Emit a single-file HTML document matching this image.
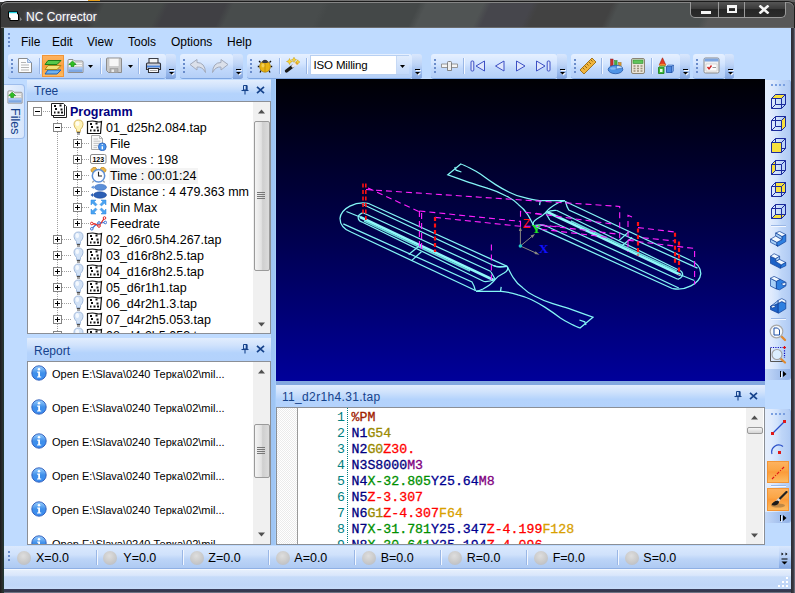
<!DOCTYPE html>
<html>
<head>
<meta charset="utf-8">
<title>NC Corrector</title>
<style>
html,body{margin:0;padding:0;}
body{width:795px;height:593px;overflow:hidden;position:relative;background:#3c3c3c;font-family:"Liberation Sans",sans-serif;font-size:12.5px;color:#000;}
.abs{position:absolute;}
#desk{left:0;top:0;width:795px;height:2px;background:linear-gradient(90deg,#f4f4f8 0,#f4f4f8 88px,#e8a020 88px,#e8a020 100px,#555 100px,#777 400px,#666 795px);}
#frame{left:0;top:1px;width:795px;height:592px;background:#1c1c1c;border-radius:7px 7px 0 0;}
#titlebar{left:1px;top:2px;width:793px;height:26px;border-radius:6px 6px 0 0;box-shadow:inset 0 1px 0 #858585, inset 0 -1px 0 #6a6a6a;
 background:linear-gradient(115deg,#3c3c3c 0%,#3c3c3c 12%,#454948 13%,#454948 20%,#404044 21%,#404044 28%,#484c4c 29%,#484c4c 40%,#444848 41%,#444848 52%,#505454 53%,#505454 60%,#46464c 61%,#46464c 66%,#424242 67%,#424242 76%,#4c5050 77%,#4c5050 88%,#585858 89%,#585858 100%);}
#title{left:26px;top:10px;color:#fff;font-size:12px;text-shadow:0 0 4px #889,0 0 2px #667;white-space:nowrap;}
#client{left:4px;top:28px;width:787px;height:561px;background:#bfdbff;}
.menu{top:35px;font-size:12px;color:#000;white-space:nowrap;}
.tb{top:54px;height:24px;border-radius:3px;background:linear-gradient(#e6f0ff 0%,#d3e5ff 40%,#c2d9fb 60%,#b4cff7 100%);border-bottom:1px solid #7ea6e2;}
.tbend{top:54px;height:24px;width:10px;border-radius:0 3px 3px 0;background:linear-gradient(#d9e7fd 0%,#bcd3f6 45%,#9bbbed 75%,#86a9e2 100%);border-bottom:1px solid #7d9fd8;}
.grip{width:3px;height:14px;top:59px;background-image:radial-gradient(circle at 1px 1px,#6a8ccb 0.9px,transparent 1.2px);background-size:3px 4px;}
.sep{width:1px;top:58px;height:16px;background:#9ab7e6;border-right:1px solid #f2f7ff;}
.ovf{width:7px;height:8px;}
.panehdr{height:21px;background:linear-gradient(#e2edfd 0%,#d1e3fc 30%,#bfd9fc 52%,#b4d3fc 65%,#b3d2fc 100%);color:#15428b;font-size:12px;}
.panehdr span{position:absolute;left:7px;top:4px;white-space:nowrap;}
.white{background:#fff;border:1px solid #8b8f96;box-sizing:border-box;overflow:hidden;}
.sb{width:17px;background:#f0f0f0;}
.thumb{left:1px;width:14px;border:1px solid #9a9a9a;border-radius:2px;background:linear-gradient(90deg,#f4f4f4 0%,#e2e2e2 45%,#cfcfcf 55%,#dcdcdc 100%);}
.trow{left:0;height:16px;white-space:nowrap;font-size:12.5px;line-height:16px;margin-top:1px;}
.rrow{left:24px;height:16px;white-space:nowrap;font-size:11px;line-height:16px;}
.code{font-family:"Liberation Mono",monospace;font-size:13.25px;font-weight:normal;-webkit-text-stroke:0.3px;white-space:pre;line-height:16px;height:16px;left:74.5px;margin-top:1px;}
.ln{font-family:"Liberation Mono",monospace;font-size:13.25px;white-space:pre;line-height:16px;height:16px;color:#008080;left:30px;width:38px;text-align:right;margin-top:1px;}
.cN{color:#000080}.cG{color:#9a8a00}.cZ{color:#ff0000}.cX{color:#009000}.cY{color:#000090}.cM{color:#800080}.cF{color:#d8a000}.cP{color:#a02000}.cS{color:#000080}
.coord{top:551px;font-size:12.5px;white-space:nowrap;}
.led{width:14px;height:14px;top:550.5px;border-radius:50%;background:radial-gradient(circle at 45% 35%,#dedede 0%,#cbcbcb 50%,#b8bcc4 90%,#c0c8d8 100%);}
.csep{width:1px;top:550px;height:15px;background:#9ab7e6;border-right:1px solid #f2f7ff;}
</style>
</head>
<body>
<div id="desk" class="abs"></div>
<div id="frame" class="abs"></div>
<div id="titlebar" class="abs"></div>
<div id="title" class="abs">NC Corrector</div>
<div id="client" class="abs"></div>

<div class="abs" style="left:8px;top:33px;width:3px;height:14px;background-image:radial-gradient(circle at 1px 1px,#6a8ccb 0.9px,transparent 1.2px);background-size:3px 4px;"></div>
<div class="abs menu" style="left:21px;">File</div>
<div class="abs menu" style="left:52px;">Edit</div>
<div class="abs menu" style="left:87px;">View</div>
<div class="abs menu" style="left:128px;">Tools</div>
<div class="abs menu" style="left:171px;">Options</div>
<div class="abs menu" style="left:227px;">Help</div>
<!-- caption buttons -->
<div class="abs" style="left:690px;top:2px;width:96px;height:16px;border:1px solid #9a9a9a;border-top:none;border-radius:0 0 5px 5px;box-sizing:border-box;background:linear-gradient(#555 0%,#3a3a3a 45%,#262626 50%,#2c2c2c 100%);"></div>
<div class="abs" style="left:718px;top:2px;width:1px;height:15px;background:#9a9a9a;"></div>
<div class="abs" style="left:744px;top:2px;width:1px;height:15px;background:#9a9a9a;"></div>
<div class="abs" style="left:701px;top:11px;width:10px;height:3px;background:#f4f4f4;"></div>
<div class="abs" style="left:727px;top:5px;width:10px;height:8px;border:2px solid #f4f4f4;border-top-width:3px;box-sizing:border-box;"></div>
<svg class="abs" style="left:758px;top:5px;" width="12" height="9" viewBox="0 0 12 9"><path d="M1.500 0.500L10.500 8.500M10.500 0.500L1.500 8.500" stroke="#f4f4f4" stroke-width="2.500" fill="none"/></svg>
<!-- app icon -->
<svg class="abs" style="left:7px;top:10px;" width="16" height="13" viewBox="0 0 16 13"><path d="M1.5 1.5 L10.5 1.5 L10.5 4 L11.5 4 L11.5 10.5 L3 10.5 L3 8 L1.5 8 Z" fill="#fff" stroke="#000" stroke-width="1"/><path d="M2 2.5 L10 2.5" stroke="#20d0e0" stroke-width="1.4"/><path d="M13 7 L13 11 L15 9.5 Z" fill="#888"/></svg>

<div class="abs tb" style="left:8px;width:158px;"></div><div class="abs tbend" style="left:166px;width:10px;"></div><div class="abs grip" style="left:11px;"></div><svg class="abs" style="left:169px;top:69px;" width="7" height="8" viewBox="0 0 7 8"><path d="M1 1.500H6" stroke="#fff" stroke-width="1" opacity=".9"/><path d="M1 4H6L3.500 6.500Z" fill="#fff" opacity=".9"/><path d="M0 0.500H5" stroke="#000" stroke-width="1"/><path d="M0 3H5L2.500 5.500Z" fill="#000"/></svg><div class="abs tb" style="left:180px;width:53px;"></div><div class="abs tbend" style="left:233px;width:10px;"></div><div class="abs grip" style="left:183px;"></div><svg class="abs" style="left:236px;top:69px;" width="7" height="8" viewBox="0 0 7 8"><path d="M1 1.500H6" stroke="#fff" stroke-width="1" opacity=".9"/><path d="M1 4H6L3.500 6.500Z" fill="#fff" opacity=".9"/><path d="M0 0.500H5" stroke="#000" stroke-width="1"/><path d="M0 3H5L2.500 5.500Z" fill="#000"/></svg><div class="abs tb" style="left:247px;width:165px;"></div><div class="abs tbend" style="left:412px;width:10px;"></div><div class="abs grip" style="left:250px;"></div><svg class="abs" style="left:415px;top:69px;" width="7" height="8" viewBox="0 0 7 8"><path d="M1 1.500H6" stroke="#fff" stroke-width="1" opacity=".9"/><path d="M1 4H6L3.500 6.500Z" fill="#fff" opacity=".9"/><path d="M0 0.500H5" stroke="#000" stroke-width="1"/><path d="M0 3H5L2.500 5.500Z" fill="#000"/></svg><div class="abs tb" style="left:431px;width:126px;"></div><div class="abs tbend" style="left:557px;width:10px;"></div><div class="abs grip" style="left:434px;"></div><svg class="abs" style="left:560px;top:69px;" width="7" height="8" viewBox="0 0 7 8"><path d="M1 1.500H6" stroke="#fff" stroke-width="1" opacity=".9"/><path d="M1 4H6L3.500 6.500Z" fill="#fff" opacity=".9"/><path d="M0 0.500H5" stroke="#000" stroke-width="1"/><path d="M0 3H5L2.500 5.500Z" fill="#000"/></svg><div class="abs tb" style="left:571px;width:109px;"></div><div class="abs tbend" style="left:680px;width:10px;"></div><div class="abs grip" style="left:574px;"></div><svg class="abs" style="left:683px;top:69px;" width="7" height="8" viewBox="0 0 7 8"><path d="M1 1.500H6" stroke="#fff" stroke-width="1" opacity=".9"/><path d="M1 4H6L3.500 6.500Z" fill="#fff" opacity=".9"/><path d="M0 0.500H5" stroke="#000" stroke-width="1"/><path d="M0 3H5L2.500 5.500Z" fill="#000"/></svg><div class="abs tb" style="left:693px;width:32px;"></div><div class="abs tbend" style="left:725px;width:9px;"></div><div class="abs grip" style="left:696px;"></div><svg class="abs" style="left:728px;top:69px;" width="7" height="8" viewBox="0 0 7 8"><path d="M1 1.500H6" stroke="#fff" stroke-width="1" opacity=".9"/><path d="M1 4H6L3.500 6.500Z" fill="#fff" opacity=".9"/><path d="M0 0.500H5" stroke="#000" stroke-width="1"/><path d="M0 3H5L2.500 5.500Z" fill="#000"/></svg><div class="abs" style="left:42px;top:55px;width:22px;height:22px;box-sizing:border-box;border:1px solid #f29536;background:linear-gradient(#fdb25f 0%,#fba647 40%,#fb9b3a 50%,#fdbb60 100%);"></div><svg class="abs" style="left:17px;top:57px;" width="16" height="17" viewBox="0 0 16 17"><path d="M1.5 1.5H10.5L14.5 5.5V15.5H1.5Z" fill="#fdfdfd" stroke="#8a8a8a"/><path d="M10.5 1.5V5.5H14.5Z" fill="#cfe0f5" stroke="#7f9fd0" stroke-width=".8"/><path d="M4 5.5H9M4 8H12M4 10.5H12M4 13H12" stroke="#b5b5b5" stroke-width="1.2"/></svg><div class="abs sep" style="left:39px;"></div><svg class="abs" style="left:44px;top:57px;" width="18" height="18" viewBox="0 0 18 18"><path d="M4 13L1 17H13L17 13Z" fill="#6fb1ee" stroke="#1e62b8" stroke-width="1"/><path d="M4 8.5L1 12.5H13L17 8.5Z" fill="#f2e27a" stroke="#a58a1a" stroke-width="1"/><path d="M4 3.5L1 7.5H13L17 3.5Z" fill="#57c84a" stroke="#1f7d1c" stroke-width="1"/></svg><svg class="abs" style="left:67px;top:58px;" width="17" height="16" viewBox="0 0 17 16"><path d="M1 2.5Q1 1.5 2 1.5H6L7.5 3H15Q16 3 16 4V14.5H1Z" fill="#f4f4f4" stroke="#8f8f8f"/><path d="M8 4.5H15.5M8 6.5H15.5M8 8.5H15.5" stroke="#c8c8c8" stroke-width=".8"/><path d="M1.5 9.5H15.5V14H1.5Z" fill="#7da7e3"/><path d="M1.5 9.5H15.5V11.5H1.5Z" fill="#a9c7f1"/><path d="M5.5 3L1.8 6.5H4V8.5H7V6.5H9.2Z" fill="#2fc024" stroke="#128a0e" stroke-width=".7"/></svg><svg class="abs" style="left:88px;top:65px;" width="5" height="3" viewBox="0 0 5 3"><path d="M0 0H5L2.500 3Z" fill="#000"/></svg><div class="abs sep" style="left:100px;"></div><svg class="abs" style="left:105px;top:57px;" width="18" height="17" viewBox="0 0 18 17"><path d="M1.5 2Q1.5 1 2.5 1H15.5Q16.5 1 16.5 2V15.5H3.5L1.5 13.5Z" fill="#c9c9c9" stroke="#8c8c8c"/><path d="M4 1.5H14V9.5H4Z" fill="#f6f6f6" stroke="#bdbdbd" stroke-width=".6"/><path d="M5 11.5H13V15.5H5Z" fill="#b0b0b0" stroke="#999" stroke-width=".6"/><path d="M6.5 12.5H9V15H6.5Z" fill="#ebebeb"/></svg><svg class="abs" style="left:128px;top:65px;" width="5" height="3" viewBox="0 0 5 3"><path d="M0 0H5L2.500 3Z" fill="#000"/></svg><div class="abs sep" style="left:138px;"></div><svg class="abs" style="left:145px;top:57px;" width="17" height="17" viewBox="0 0 17 17"><path d="M4 1.500H13V7H4Z" fill="#f4f4f4" stroke="#3c3e46" stroke-width="1.100"/><path d="M1.500 7Q1.500 6 2.500 6H14.500Q15.500 6 15.500 7V12.500H1.500Z" fill="#c8ccd6" stroke="#2e3038" stroke-width="1.100"/><path d="M2 9.500H15" stroke="#4a86e0" stroke-width="1.800"/><path d="M3.500 11.500H13.500V15.500H3.500Z" fill="#fdfdfd" stroke="#2e3038" stroke-width="1.100"/><path d="M5 13.5H12" stroke="#999" stroke-width=".8"/></svg><svg class="abs" style="left:189px;top:58px;" width="18" height="16" viewBox="0 0 18 16"><path d="M1 6.5L8 1.5V4.5Q16 4.5 16.5 14.5Q13.5 8.5 8 9V12Z" fill="#dbe0ea" stroke="#a2aabb" stroke-width="1" stroke-linejoin="round"/></svg><svg class="abs" style="left:211px;top:58px;" width="18" height="16" viewBox="0 0 18 16"><path d="M17 6.5L10 1.5V4.5Q2 4.5 1.5 14.5Q4.5 8.5 10 9V12Z" fill="#dbe0ea" stroke="#a2aabb" stroke-width="1" stroke-linejoin="round"/></svg><svg class="abs" style="left:257px;top:57px;" width="16" height="17" viewBox="0 0 16 17"><path d="M3.500 5.500L2 4M12.500 5.500L14 4M2.500 9.500H0.800M13.500 9.500H15.200M4 13.500L3 15.500M12 13.500L13 15.500" stroke="#111" stroke-width="1.300"/><ellipse cx="8" cy="9.500" rx="5.400" ry="5.700" fill="#e9b314" stroke="#a87a00" stroke-width=".7"/><path d="M8 5V15" stroke="#b88a08" stroke-width=".8"/><path d="M4.500 5.200Q8 0.500 11.500 5.200Q8 7 4.500 5.200Z" fill="#3a3a40"/><ellipse cx="6" cy="8.500" rx="1.500" ry="2" fill="#f8dc70" opacity=".7"/></svg><div class="abs sep" style="left:279px;"></div><svg class="abs" style="left:284px;top:57px;" width="17" height="17" viewBox="0 0 17 17"><path d="M2.500 14L9 9" stroke="#1a1a1a" stroke-width="3.400" stroke-linecap="round"/><path d="M9 9L13 6" stroke="#e8e8ee" stroke-width="3.400" stroke-linecap="round"/><path d="M12 6.800L13.500 5.600" stroke="#e8a030" stroke-width="3"/><path d="M5.5 1.5L6.40 3.60L8.5 4.5L6.40 5.40L5.5 7.5L4.60 5.40L2.5 4.5L4.60 3.60Z" fill="#f8d838" stroke="#c89a10" stroke-width=".5"/><path d="M10 0.19999999999999973L10.78 2.02L12.6 2.8L10.78 3.58L10 5.4L9.22 3.58L7.4 2.8L9.22 2.02Z" fill="#f8d838" stroke="#c89a10" stroke-width=".5"/><path d="M13.8 2.8L14.46 4.34L16.0 5L14.46 5.66L13.8 7.2L13.14 5.66L11.600000000000001 5L13.14 4.34Z" fill="#f8d838" stroke="#c89a10" stroke-width=".5"/></svg><div class="abs sep" style="left:306px;"></div><div class="abs" style="left:310px;top:55px;width:99px;height:20px;box-sizing:border-box;border:1px solid #b8d0f2;background:#fff;"></div><div class="abs" style="left:313.5px;top:59px;font-size:11.5px;letter-spacing:-0.15px;white-space:nowrap;">ISO Milling</div><div class="abs" style="left:396px;top:56px;width:12px;height:18px;background:linear-gradient(#e2edfd,#c3d9fa);border-left:1px solid #c6d9f5;"></div><svg class="abs" style="left:400px;top:65px;" width="5" height="3" viewBox="0 0 5 3"><path d="M0 0H5L2.500 3Z" fill="#000"/></svg><svg class="abs" style="left:441px;top:61px;" width="17" height="11" viewBox="0 0 17 11"><path d="M0.500 3H16.500V6.500H0.500Z" fill="#f4f4f4" stroke="#8d8d8d" stroke-width=".9"/><path d="M6.500 1.500Q6.500 0.500 7.500 0.500H9.500Q10.500 0.500 10.500 1.500V9.500H6.500Z" fill="#efefef" stroke="#777" stroke-width=".9"/></svg><div class="abs sep" style="left:463px;"></div><svg class="abs" style="left:469.5px;top:60px;" width="16" height="12" viewBox="0 0 16 12"><rect x="1" y="1" width="2.800" height="10" rx="1" fill="#dfe6fb" stroke="#3c4fc4"/><path d="M14.500 1V11L6 6Z" fill="#dfe6fb" stroke="#3c4fc4" stroke-linejoin="round"/></svg><svg class="abs" style="left:493.5px;top:60px;" width="12" height="12" viewBox="0 0 12 12"><path d="M10 1V11L1.500 6Z" fill="#dfe6fb" stroke="#3c4fc4" stroke-linejoin="round"/></svg><svg class="abs" style="left:514.5px;top:60px;" width="12" height="12" viewBox="0 0 12 12"><path d="M1.500 1V11L10 6Z" fill="#dfe6fb" stroke="#3c4fc4" stroke-linejoin="round"/></svg><svg class="abs" style="left:535px;top:60px;" width="16" height="12" viewBox="0 0 16 12"><rect x="12.200" y="1" width="2.800" height="10" rx="1" fill="#dfe6fb" stroke="#3c4fc4"/><path d="M1.500 1V11L10 6Z" fill="#dfe6fb" stroke="#3c4fc4" stroke-linejoin="round"/></svg><svg class="abs" style="left:579px;top:57px;" width="18" height="18" viewBox="0 0 18 18"><path d="M1 13L13 1L17 5L5 17Z" fill="#f0b43c" stroke="#9a6a10" stroke-width=".9"/><path d="M4 11L5.5 12.5M6 9L8 11M8 7L9.5 8.5M10 5L12 7M12 3L13.5 4.5" stroke="#7a5208" stroke-width=".8"/></svg><div class="abs sep" style="left:601px;"></div><svg class="abs" style="left:607px;top:57px;" width="17" height="18" viewBox="0 0 17 18"><rect x="3.500" y="2" width="2.600" height="7" fill="#c8302c" stroke="#7a1010" stroke-width=".4"/><rect x="7.500" y="3.500" width="2.600" height="6" fill="#48b040" stroke="#1a6a18" stroke-width=".4"/><rect x="11.500" y="5.500" width="2.600" height="5" fill="#e0982a" stroke="#8a5a08" stroke-width=".4"/><ellipse cx="8.500" cy="12.500" rx="7.300" ry="4.200" fill="#4f94e6" stroke="#2458a8" stroke-width=".8"/><path d="M9 12L16 11A7.300 4.200 0 0 0 10 8.400Z" fill="#c4defc" stroke="#2458a8" stroke-width=".5"/><ellipse cx="6" cy="11.500" rx="3" ry="1.200" fill="#9cc8f8" opacity=".7"/></svg><svg class="abs" style="left:630px;top:57px;" width="16" height="18" viewBox="0 0 16 18"><rect x="1.5" y="1.5" width="13" height="15" rx="1.5" fill="#e9e4d8" stroke="#8a8476"/><rect x="3" y="3" width="10" height="3.5" fill="#5ec45a" stroke="#2f8a2d" stroke-width=".6"/><path d="M3.5 9H5.5M7 9H9M10.5 9H12.5M3.5 11.5H5.5M7 11.5H9M10.5 11.5H12.5M3.5 14H5.5M7 14H9M10.5 14H12.5" stroke="#9a8f78" stroke-width="1.5"/></svg><div class="abs sep" style="left:651px;"></div><svg class="abs" style="left:657px;top:57px;" width="17" height="18" viewBox="0 0 17 18"><path d="M5.500 0.800L8.800 8H2.200Z" fill="#e43a22" stroke="#a01c0c" stroke-width=".6"/><ellipse cx="5.500" cy="8" rx="3.300" ry="1.300" fill="#f08a30"/><path d="M1.500 10.500H7V16.500H1.500Z" fill="#3cba38" stroke="#1b7a18" stroke-width=".8"/><path d="M1.500 10.500L3 9H8.500L7 10.500Z" fill="#8fe08a" stroke="#1b7a18" stroke-width=".5"/><path d="M3 12H5.500V15H3Z" fill="#e8f8e6"/><path d="M9.500 9.500H15V15.500H9.500Z" fill="#4a86e0" stroke="#1d4fa5" stroke-width=".8"/><path d="M9.500 9.500L11 8H16.500L15 9.500ZM15 9.500L16.500 8V14L15 15.500Z" fill="#8cb6f2" stroke="#1d4fa5" stroke-width=".5"/></svg><svg class="abs" style="left:703px;top:57px;" width="17" height="17" viewBox="0 0 17 17"><rect x="1" y="1" width="15" height="15" rx="1.5" fill="#f0f0f0" stroke="#8a8a8a"/><path d="M1.5 1.5H15.5V4.5H1.5Z" fill="#7fa6e0"/><path d="M3 7H14V14H3Z" fill="#fcfcfc" stroke="#c4c4c4" stroke-width=".6"/><path d="M4.5 10L6 11.8L8.5 8.5" stroke="#d02020" stroke-width="1.4" fill="none"/><path d="M9.5 10.5H13" stroke="#999" stroke-width="1"/></svg>
<div class="abs" style="left:4px;top:84px;width:21px;height:55px;box-sizing:border-box;border:1px solid #9ebdec;border-left:none;border-radius:0 4px 4px 0;background:linear-gradient(90deg,#e9f1fd,#d6e5fb);"></div><svg class="abs" style="left:7px;top:89px;" width="16" height="16" viewBox="0 0 17 16"><path d="M1 2.5Q1 1.5 2 1.5H6L7.5 3H15Q16 3 16 4V14.5H1Z" fill="#f4f4f4" stroke="#8f8f8f"/><path d="M8 4.5H15.5M8 6.5H15.5M8 8.5H15.5" stroke="#c8c8c8" stroke-width=".8"/><path d="M1.5 9.5H15.5V14H1.5Z" fill="#7da7e3"/><path d="M1.5 9.5H15.5V11.5H1.5Z" fill="#a9c7f1"/><path d="M5.5 3L1.8 6.5H4V8.5H7V6.5H9.2Z" fill="#2fc024" stroke="#128a0e" stroke-width=".7"/></svg><div class="abs" style="left:8px;top:108px;width:14px;height:30px;color:#15428b;font-size:12.5px;writing-mode:vertical-rl;line-height:14px;white-space:nowrap;">Files</div><div class="abs panehdr" style="left:27px;top:80px;width:244px;"><span>Tree</span></div><svg class="abs" style="left:240.5px;top:85px;" width="8" height="10" viewBox="0 0 8 10"><path d="M2.500 0.500H6V5H2.500Z" fill="none" stroke="#15428b" stroke-width="1"/><path d="M5.500 0.500V5" stroke="#15428b" stroke-width="1.600"/><path d="M0.500 5.500H7.500" stroke="#15428b" stroke-width="1.100"/><path d="M4 5.500V9.500" stroke="#15428b" stroke-width="1.100"/></svg><svg class="abs" style="left:255.5px;top:86px;" width="9" height="8" viewBox="0 0 9 8"><path d="M1 0.8L8 7.2M8 0.8L1 7.2" stroke="#15428b" stroke-width="1.7" fill="none"/></svg><div class="abs white" id="tree" style="left:27px;top:101px;width:244px;height:233px;"><div class="abs sb" style="left:225px;top:0;height:231px;"><svg class="abs" style="left:4px;top:7px;" width="9" height="5" viewBox="0 0 9 5"><path d="M1 4.500L4.500 0.500L8 4.500Z" fill="#505050"/></svg><div class="abs thumb" style="top:19px;height:148px;"></div><svg class="abs" style="left:4px;top:90px;" width="8" height="7"><path d="M0 .5H8M0 2.5H8M0 4.5H8M0 6.5H8" stroke="#777" stroke-width="1"/></svg><svg class="abs" style="left:4px;top:220px;" width="9" height="5" viewBox="0 0 9 5"><path d="M1 0.500L4.500 4.500L8 0.500Z" fill="#505050"/></svg></div><svg class="abs" style="left:0;top:0;" width="226" height="232"><path d="M29.500 18V232M49.500 34V122" stroke="#a0a0a0" stroke-width="1" stroke-dasharray="1 1" fill="none"/><path d="M30 25.5H44" stroke="#a0a0a0" stroke-width="1" stroke-dasharray="1 1"/><path d="M30 137.5H44" stroke="#a0a0a0" stroke-width="1" stroke-dasharray="1 1"/><path d="M30 153.5H44" stroke="#a0a0a0" stroke-width="1" stroke-dasharray="1 1"/><path d="M30 169.5H44" stroke="#a0a0a0" stroke-width="1" stroke-dasharray="1 1"/><path d="M30 185.5H44" stroke="#a0a0a0" stroke-width="1" stroke-dasharray="1 1"/><path d="M30 201.5H44" stroke="#a0a0a0" stroke-width="1" stroke-dasharray="1 1"/><path d="M30 217.5H44" stroke="#a0a0a0" stroke-width="1" stroke-dasharray="1 1"/><path d="M30 233.5H44" stroke="#a0a0a0" stroke-width="1" stroke-dasharray="1 1"/><path d="M50 41.5H62" stroke="#a0a0a0" stroke-width="1" stroke-dasharray="1 1"/><path d="M50 57.5H62" stroke="#a0a0a0" stroke-width="1" stroke-dasharray="1 1"/><path d="M50 73.5H62" stroke="#a0a0a0" stroke-width="1" stroke-dasharray="1 1"/><path d="M50 89.5H62" stroke="#a0a0a0" stroke-width="1" stroke-dasharray="1 1"/><path d="M50 105.5H62" stroke="#a0a0a0" stroke-width="1" stroke-dasharray="1 1"/><path d="M50 121.5H62" stroke="#a0a0a0" stroke-width="1" stroke-dasharray="1 1"/><path d="M11 9.5H22" stroke="#a0a0a0" stroke-width="1" stroke-dasharray="1 1"/></svg><div class="abs" style="left:5px;top:5px;width:9px;height:9px;box-sizing:border-box;border:1px solid #848484;background:#fff;"></div><div class="abs" style="left:7px;top:9px;width:5px;height:1px;background:#000;"></div><svg class="abs" style="left:22px;top:0px;" width="18" height="17" viewBox="0 0 18 17"><path d="M3.5 3.5H15.5L16.5 4.5V15.5H3.5Z" fill="#fff" stroke="#222"/><path d="M1.5 1.5H13.5L14.5 2.5V13.5H1.5Z" fill="#fff" stroke="#222"/><path d="M4 4H6M9.500 3.500H11.500M5 7H7M10.500 7.500H12.500M7.500 10.500H9.500M11 10.500H13M4 10.500H5.500" stroke="#111" stroke-width="2"/></svg><div class="abs trow" style="left:42px;top:1px;font-weight:bold;color:#000080;">Programm</div><div class="abs" style="left:25px;top:21px;width:9px;height:9px;box-sizing:border-box;border:1px solid #848484;background:#fff;"></div><div class="abs" style="left:27px;top:25px;width:5px;height:1px;background:#000;"></div><svg class="abs" style="left:45px;top:17px;" width="11" height="16" viewBox="0 0 11 16"><path d="M5.5 1Q10 1 10 5.5Q10 8 7.5 10.5V12.5H3.5V10.5Q1 8 1 5.5Q1 1 5.5 1Z" fill="#fdf3b8" stroke="#d4b050" stroke-width=".9"/><ellipse cx="4.500" cy="4.500" rx="2" ry="2.500" fill="#fff" opacity=".8"/><path d="M3.8 13.500H7.200M4 15H7" stroke="#555" stroke-width="1.200"/></svg><svg class="abs" style="left:58px;top:18px;" width="17" height="15" viewBox="0 0 17 15"><path d="M1.500 1.500Q7 0.500 10 1.500T15.500 1.500L14.500 13.500H1.500Z" fill="#fff" stroke="#111" stroke-width="1.200"/><path d="M4 4H6M9.500 3.500H11.500M5 7H7M10.500 7.500H12.500M7.500 10.500H9.500M11 10.500H13M4 10.500H5.500" stroke="#111" stroke-width="2"/></svg><div class="abs trow" style="left:78px;top:17px;">01_d25h2.084.tap</div><div class="abs" style="left:45px;top:37px;width:9px;height:9px;box-sizing:border-box;border:1px solid #848484;background:#fff;"></div><div class="abs" style="left:47px;top:41px;width:5px;height:1px;background:#000;"></div><div class="abs" style="left:49px;top:39px;width:1px;height:5px;background:#000;"></div><svg class="abs" style="left:62px;top:33px;" width="17" height="16" viewBox="0 0 17 16"><path d="M1.500 .500H9.500L12.500 3.500V14.500H1.500Z" fill="#f8f8f8" stroke="#a8a8a8"/><path d="M9.500 .500V3.500H12.500" fill="none" stroke="#a8a8a8" stroke-width=".8"/><path d="M3.500 4H8M3.500 6.200H10.500M3.500 8.400H10.500M3.500 10.600H8M3.500 12.600H7" stroke="#bdbdbd" stroke-width=".9"/><circle cx="12.300" cy="11.800" r="3.900" fill="#4a94ea" stroke="#2a60b8" stroke-width=".8"/><path d="M12.300 9.200V10M12.300 11.200V14.200" stroke="#fff" stroke-width="1.400"/></svg><div class="abs trow" style="left:81px;top:33px;padding:0 2px 0 1px;">File</div><div class="abs" style="left:45px;top:53px;width:9px;height:9px;box-sizing:border-box;border:1px solid #848484;background:#fff;"></div><div class="abs" style="left:47px;top:57px;width:5px;height:1px;background:#000;"></div><div class="abs" style="left:49px;top:55px;width:1px;height:5px;background:#000;"></div><svg class="abs" style="left:62px;top:49px;" width="17" height="16" viewBox="0 0 17 16"><rect x=".5" y="3.500" width="15.500" height="9" rx="1.500" fill="#fff" stroke="#8c8c8c"/><text x="8.300" y="10.600" font-family="Liberation Sans, sans-serif" font-size="7" font-weight="bold" text-anchor="middle" fill="#000">123</text></svg><div class="abs trow" style="left:81px;top:49px;padding:0 2px 0 1px;">Moves : 198</div><div class="abs" style="left:45px;top:69px;width:9px;height:9px;box-sizing:border-box;border:1px solid #848484;background:#fff;"></div><div class="abs" style="left:47px;top:73px;width:5px;height:1px;background:#000;"></div><div class="abs" style="left:49px;top:71px;width:1px;height:5px;background:#000;"></div><svg class="abs" style="left:62px;top:65px;" width="17" height="16" viewBox="0 0 17 16"><ellipse cx="3.8" cy="2.8" rx="3" ry="2.300" transform="rotate(-35 3.8 2.8)" fill="#ecb548" stroke="#b88420" stroke-width=".6"/><ellipse cx="13.200" cy="2.8" rx="3" ry="2.300" transform="rotate(35 13.2 2.8)" fill="#ecb548" stroke="#b88420" stroke-width=".6"/><path d="M3.500 14L2.500 15.500M13.500 14L14.500 15.500" stroke="#888" stroke-width="1.200"/><circle cx="8.500" cy="8.800" r="6.200" fill="#fcfcff" stroke="#5c8fd6" stroke-width="1.500"/><path d="M8.500 4.800V9H12" stroke="#222" stroke-width="1.100" fill="none"/></svg><div class="abs trow" style="left:81px;top:65px;padding:0 2px 0 1px;background:#f4f4f4;">Time : 00:01:24</div><div class="abs" style="left:45px;top:85px;width:9px;height:9px;box-sizing:border-box;border:1px solid #848484;background:#fff;"></div><div class="abs" style="left:47px;top:89px;width:5px;height:1px;background:#000;"></div><div class="abs" style="left:49px;top:87px;width:1px;height:5px;background:#000;"></div><svg class="abs" style="left:62px;top:81px;" width="17" height="16" viewBox="0 0 17 16"><ellipse cx="10.500" cy="4.300" rx="6" ry="3" fill="#5b8fd8" stroke="#3a6cc0" stroke-width=".6"/><path d="M1 4.300L3.800 2.500V6.100Z" fill="#5b8fd8"/><ellipse cx="10" cy="12" rx="6.500" ry="3.200" fill="#2c5fb4" stroke="#204a98" stroke-width=".6"/><path d="M0.500 12L3 10V14Z" fill="#2c5fb4"/></svg><div class="abs trow" style="left:81px;top:81px;padding:0 2px 0 1px;">Distance : 4 479.363 mm</div><div class="abs" style="left:45px;top:101px;width:9px;height:9px;box-sizing:border-box;border:1px solid #848484;background:#fff;"></div><div class="abs" style="left:47px;top:105px;width:5px;height:1px;background:#000;"></div><div class="abs" style="left:49px;top:103px;width:1px;height:5px;background:#000;"></div><svg class="abs" style="left:62px;top:97px;" width="17" height="16" viewBox="0 0 17 16"><path d="M1 1H6L4.3 2.7L7 5.5L5.5 7L2.7 4.3L1 6ZM16 1V6L14.3 4.3L11.5 7L10 5.5L12.7 2.7L11 1ZM1 15V10L2.7 11.7L5.5 9L7 10.5L4.3 13.3L6 15ZM16 15H11L12.7 13.3L10 10.5L11.5 9L14.3 11.7L16 10Z" fill="#4aa4f2" stroke="#2f86dc" stroke-width=".5"/></svg><div class="abs trow" style="left:81px;top:97px;padding:0 2px 0 1px;">Min Max</div><div class="abs" style="left:45px;top:117px;width:9px;height:9px;box-sizing:border-box;border:1px solid #848484;background:#fff;"></div><div class="abs" style="left:47px;top:121px;width:5px;height:1px;background:#000;"></div><div class="abs" style="left:49px;top:119px;width:1px;height:5px;background:#000;"></div><svg class="abs" style="left:62px;top:113px;" width="17" height="16" viewBox="0 0 17 16"><path d="M1.500 14L5 10.500L9 8L15.500 7.500" stroke="#3a6fd0" stroke-width="1.100" fill="none"/><path d="M1.500 8.500L5 9L9 11L14.500 3" stroke="#e02828" stroke-width="1.300" fill="none"/><g fill="#fff" stroke-width="1"><circle cx="1.800" cy="13.800" r="1.300" stroke="#3a6fd0"/><circle cx="9" cy="8" r="1.300" stroke="#3a6fd0"/><circle cx="15.300" cy="7.500" r="1.300" stroke="#3a6fd0"/><circle cx="1.800" cy="8.500" r="1.300" stroke="#e02828"/><circle cx="9" cy="11" r="1.300" stroke="#e02828"/><circle cx="14.500" cy="3" r="1.300" stroke="#e02828"/></g></svg><div class="abs trow" style="left:81px;top:113px;padding:0 2px 0 1px;">Feedrate</div><div class="abs" style="left:25px;top:133px;width:9px;height:9px;box-sizing:border-box;border:1px solid #848484;background:#fff;"></div><div class="abs" style="left:27px;top:137px;width:5px;height:1px;background:#000;"></div><div class="abs" style="left:29px;top:135px;width:1px;height:5px;background:#000;"></div><svg class="abs" style="left:45px;top:129px;" width="11" height="16" viewBox="0 0 11 16"><path d="M5.5 1Q10 1 10 5.5Q10 8 7.5 10.5V12.5H3.5V10.5Q1 8 1 5.5Q1 1 5.5 1Z" fill="#d2e2f6" stroke="#9cb4d8" stroke-width=".9"/><ellipse cx="4.300" cy="4.500" rx="1.800" ry="2.600" fill="#fff" opacity=".75"/><path d="M3.800 13.500H7.200M4 15H7" stroke="#4a4a4a" stroke-width="1.200"/></svg><svg class="abs" style="left:58px;top:130px;" width="17" height="15" viewBox="0 0 17 15"><path d="M1.500 1.500Q7 0.500 10 1.500T15.500 1.500L14.500 13.500H1.500Z" fill="#fff" stroke="#111" stroke-width="1.200"/><path d="M4 4H6M9.500 3.500H11.500M5 7H7M10.500 7.500H12.500M7.500 10.500H9.500M11 10.500H13M4 10.500H5.500" stroke="#111" stroke-width="2"/></svg><div class="abs trow" style="left:78px;top:129px;">02_d6r0.5h4.267.tap</div><div class="abs" style="left:25px;top:149px;width:9px;height:9px;box-sizing:border-box;border:1px solid #848484;background:#fff;"></div><div class="abs" style="left:27px;top:153px;width:5px;height:1px;background:#000;"></div><div class="abs" style="left:29px;top:151px;width:1px;height:5px;background:#000;"></div><svg class="abs" style="left:45px;top:145px;" width="11" height="16" viewBox="0 0 11 16"><path d="M5.5 1Q10 1 10 5.5Q10 8 7.5 10.5V12.5H3.5V10.5Q1 8 1 5.5Q1 1 5.5 1Z" fill="#d2e2f6" stroke="#9cb4d8" stroke-width=".9"/><ellipse cx="4.300" cy="4.500" rx="1.800" ry="2.600" fill="#fff" opacity=".75"/><path d="M3.800 13.500H7.200M4 15H7" stroke="#4a4a4a" stroke-width="1.200"/></svg><svg class="abs" style="left:58px;top:146px;" width="17" height="15" viewBox="0 0 17 15"><path d="M1.500 1.500Q7 0.500 10 1.500T15.500 1.500L14.500 13.500H1.500Z" fill="#fff" stroke="#111" stroke-width="1.200"/><path d="M4 4H6M9.500 3.500H11.500M5 7H7M10.500 7.500H12.500M7.500 10.500H9.500M11 10.500H13M4 10.500H5.500" stroke="#111" stroke-width="2"/></svg><div class="abs trow" style="left:78px;top:145px;">03_d16r8h2.5.tap</div><div class="abs" style="left:25px;top:165px;width:9px;height:9px;box-sizing:border-box;border:1px solid #848484;background:#fff;"></div><div class="abs" style="left:27px;top:169px;width:5px;height:1px;background:#000;"></div><div class="abs" style="left:29px;top:167px;width:1px;height:5px;background:#000;"></div><svg class="abs" style="left:45px;top:161px;" width="11" height="16" viewBox="0 0 11 16"><path d="M5.5 1Q10 1 10 5.5Q10 8 7.5 10.5V12.5H3.5V10.5Q1 8 1 5.5Q1 1 5.5 1Z" fill="#d2e2f6" stroke="#9cb4d8" stroke-width=".9"/><ellipse cx="4.300" cy="4.500" rx="1.800" ry="2.600" fill="#fff" opacity=".75"/><path d="M3.800 13.500H7.200M4 15H7" stroke="#4a4a4a" stroke-width="1.200"/></svg><svg class="abs" style="left:58px;top:162px;" width="17" height="15" viewBox="0 0 17 15"><path d="M1.500 1.500Q7 0.500 10 1.500T15.500 1.500L14.500 13.500H1.500Z" fill="#fff" stroke="#111" stroke-width="1.200"/><path d="M4 4H6M9.500 3.500H11.500M5 7H7M10.500 7.500H12.500M7.500 10.500H9.500M11 10.500H13M4 10.500H5.500" stroke="#111" stroke-width="2"/></svg><div class="abs trow" style="left:78px;top:161px;">04_d16r8h2.5.tap</div><div class="abs" style="left:25px;top:181px;width:9px;height:9px;box-sizing:border-box;border:1px solid #848484;background:#fff;"></div><div class="abs" style="left:27px;top:185px;width:5px;height:1px;background:#000;"></div><div class="abs" style="left:29px;top:183px;width:1px;height:5px;background:#000;"></div><svg class="abs" style="left:45px;top:177px;" width="11" height="16" viewBox="0 0 11 16"><path d="M5.5 1Q10 1 10 5.5Q10 8 7.5 10.5V12.5H3.5V10.5Q1 8 1 5.5Q1 1 5.5 1Z" fill="#d2e2f6" stroke="#9cb4d8" stroke-width=".9"/><ellipse cx="4.300" cy="4.500" rx="1.800" ry="2.600" fill="#fff" opacity=".75"/><path d="M3.800 13.500H7.200M4 15H7" stroke="#4a4a4a" stroke-width="1.200"/></svg><svg class="abs" style="left:58px;top:178px;" width="17" height="15" viewBox="0 0 17 15"><path d="M1.500 1.500Q7 0.500 10 1.500T15.500 1.500L14.500 13.500H1.500Z" fill="#fff" stroke="#111" stroke-width="1.200"/><path d="M4 4H6M9.500 3.500H11.500M5 7H7M10.500 7.500H12.500M7.500 10.500H9.500M11 10.500H13M4 10.500H5.500" stroke="#111" stroke-width="2"/></svg><div class="abs trow" style="left:78px;top:177px;">05_d6r1h1.tap</div><div class="abs" style="left:25px;top:197px;width:9px;height:9px;box-sizing:border-box;border:1px solid #848484;background:#fff;"></div><div class="abs" style="left:27px;top:201px;width:5px;height:1px;background:#000;"></div><div class="abs" style="left:29px;top:199px;width:1px;height:5px;background:#000;"></div><svg class="abs" style="left:45px;top:193px;" width="11" height="16" viewBox="0 0 11 16"><path d="M5.5 1Q10 1 10 5.5Q10 8 7.5 10.5V12.5H3.5V10.5Q1 8 1 5.5Q1 1 5.5 1Z" fill="#d2e2f6" stroke="#9cb4d8" stroke-width=".9"/><ellipse cx="4.300" cy="4.500" rx="1.800" ry="2.600" fill="#fff" opacity=".75"/><path d="M3.800 13.500H7.200M4 15H7" stroke="#4a4a4a" stroke-width="1.200"/></svg><svg class="abs" style="left:58px;top:194px;" width="17" height="15" viewBox="0 0 17 15"><path d="M1.500 1.500Q7 0.500 10 1.500T15.500 1.500L14.500 13.500H1.500Z" fill="#fff" stroke="#111" stroke-width="1.200"/><path d="M4 4H6M9.500 3.500H11.500M5 7H7M10.500 7.500H12.500M7.500 10.500H9.500M11 10.500H13M4 10.500H5.500" stroke="#111" stroke-width="2"/></svg><div class="abs trow" style="left:78px;top:193px;">06_d4r2h1.3.tap</div><div class="abs" style="left:25px;top:213px;width:9px;height:9px;box-sizing:border-box;border:1px solid #848484;background:#fff;"></div><div class="abs" style="left:27px;top:217px;width:5px;height:1px;background:#000;"></div><div class="abs" style="left:29px;top:215px;width:1px;height:5px;background:#000;"></div><svg class="abs" style="left:45px;top:209px;" width="11" height="16" viewBox="0 0 11 16"><path d="M5.5 1Q10 1 10 5.5Q10 8 7.5 10.5V12.5H3.5V10.5Q1 8 1 5.5Q1 1 5.5 1Z" fill="#d2e2f6" stroke="#9cb4d8" stroke-width=".9"/><ellipse cx="4.300" cy="4.500" rx="1.800" ry="2.600" fill="#fff" opacity=".75"/><path d="M3.800 13.500H7.200M4 15H7" stroke="#4a4a4a" stroke-width="1.200"/></svg><svg class="abs" style="left:58px;top:210px;" width="17" height="15" viewBox="0 0 17 15"><path d="M1.500 1.500Q7 0.500 10 1.500T15.500 1.500L14.500 13.500H1.500Z" fill="#fff" stroke="#111" stroke-width="1.200"/><path d="M4 4H6M9.500 3.500H11.500M5 7H7M10.500 7.500H12.500M7.500 10.500H9.500M11 10.500H13M4 10.500H5.500" stroke="#111" stroke-width="2"/></svg><div class="abs trow" style="left:78px;top:209px;">07_d4r2h5.053.tap</div><div class="abs" style="left:25px;top:229px;width:9px;height:9px;box-sizing:border-box;border:1px solid #848484;background:#fff;"></div><div class="abs" style="left:27px;top:233px;width:5px;height:1px;background:#000;"></div><div class="abs" style="left:29px;top:231px;width:1px;height:5px;background:#000;"></div><svg class="abs" style="left:45px;top:225px;" width="11" height="16" viewBox="0 0 11 16"><path d="M5.5 1Q10 1 10 5.5Q10 8 7.5 10.5V12.5H3.5V10.5Q1 8 1 5.5Q1 1 5.5 1Z" fill="#d2e2f6" stroke="#9cb4d8" stroke-width=".9"/><ellipse cx="4.300" cy="4.500" rx="1.800" ry="2.600" fill="#fff" opacity=".75"/><path d="M3.800 13.500H7.200M4 15H7" stroke="#4a4a4a" stroke-width="1.200"/></svg><svg class="abs" style="left:58px;top:226px;" width="17" height="15" viewBox="0 0 17 15"><path d="M1.500 1.500Q7 0.500 10 1.500T15.500 1.500L14.500 13.500H1.500Z" fill="#fff" stroke="#111" stroke-width="1.200"/><path d="M4 4H6M9.500 3.500H11.500M5 7H7M10.500 7.500H12.500M7.500 10.500H9.500M11 10.500H13M4 10.500H5.500" stroke="#111" stroke-width="2"/></svg><div class="abs trow" style="left:78px;top:225px;">08_d4r2h5.053.tap</div></div><div class="abs panehdr" style="left:27px;top:338px;width:244px;height:23px;"><span style="top:6px;">Report</span></div><svg class="abs" style="left:240.5px;top:344px;" width="8" height="10" viewBox="0 0 8 10"><path d="M2.500 0.500H6V5H2.500Z" fill="none" stroke="#15428b" stroke-width="1"/><path d="M5.500 0.500V5" stroke="#15428b" stroke-width="1.600"/><path d="M0.500 5.500H7.500" stroke="#15428b" stroke-width="1.100"/><path d="M4 5.500V9.500" stroke="#15428b" stroke-width="1.100"/></svg><svg class="abs" style="left:255.5px;top:345px;" width="9" height="8" viewBox="0 0 9 8"><path d="M1 0.8L8 7.2M8 0.8L1 7.2" stroke="#15428b" stroke-width="1.7" fill="none"/></svg><div class="abs white" id="report" style="left:27px;top:361px;width:244px;height:184px;"><div class="abs sb" style="left:225px;top:0;height:182px;"><svg class="abs" style="left:4px;top:7px;" width="9" height="5" viewBox="0 0 9 5"><path d="M1 4.500L4.500 0.500L8 4.500Z" fill="#505050"/></svg><div class="abs thumb" style="top:62px;height:52px;"></div><svg class="abs" style="left:4px;top:85px;" width="8" height="7"><path d="M0 .5H8M0 2.5H8M0 4.5H8M0 6.5H8" stroke="#777" stroke-width="1"/></svg><svg class="abs" style="left:4px;top:170px;" width="9" height="5" viewBox="0 0 9 5"><path d="M1 0.500L4.500 4.500L8 0.500Z" fill="#505050"/></svg></div><svg class="abs" style="left:3px;top:3px;" width="16" height="16" viewBox="0 0 16 16"><defs><linearGradient id="ig0" x1="0" y1="0" x2="0" y2="1"><stop offset="0" stop-color="#9ad0ff"/><stop offset=".5" stop-color="#3f8fea"/><stop offset="1" stop-color="#3a8cf0"/></linearGradient></defs><circle cx="8" cy="8" r="7.200" fill="url(#ig0)" stroke="#2a58b8" stroke-width=".9"/><circle cx="8" cy="4.200" r="1.300" fill="#fff"/><path d="M6.200 6.600H9V11.400H10.200V12.600H6V11.400H7.200V7.800H6.200Z" fill="#fff"/></svg><div class="abs rrow" style="top:4px;">Open E:\Slava\0240 Терка\02\mil...</div><svg class="abs" style="left:3px;top:37px;" width="16" height="16" viewBox="0 0 16 16"><defs><linearGradient id="ig1" x1="0" y1="0" x2="0" y2="1"><stop offset="0" stop-color="#9ad0ff"/><stop offset=".5" stop-color="#3f8fea"/><stop offset="1" stop-color="#3a8cf0"/></linearGradient></defs><circle cx="8" cy="8" r="7.200" fill="url(#ig1)" stroke="#2a58b8" stroke-width=".9"/><circle cx="8" cy="4.200" r="1.300" fill="#fff"/><path d="M6.200 6.600H9V11.400H10.200V12.600H6V11.400H7.200V7.800H6.200Z" fill="#fff"/></svg><div class="abs rrow" style="top:38px;">Open E:\Slava\0240 Терка\02\mil...</div><svg class="abs" style="left:3px;top:71px;" width="16" height="16" viewBox="0 0 16 16"><defs><linearGradient id="ig2" x1="0" y1="0" x2="0" y2="1"><stop offset="0" stop-color="#9ad0ff"/><stop offset=".5" stop-color="#3f8fea"/><stop offset="1" stop-color="#3a8cf0"/></linearGradient></defs><circle cx="8" cy="8" r="7.200" fill="url(#ig2)" stroke="#2a58b8" stroke-width=".9"/><circle cx="8" cy="4.200" r="1.300" fill="#fff"/><path d="M6.200 6.600H9V11.400H10.200V12.600H6V11.400H7.200V7.800H6.200Z" fill="#fff"/></svg><div class="abs rrow" style="top:72px;">Open E:\Slava\0240 Терка\02\mil...</div><svg class="abs" style="left:3px;top:105px;" width="16" height="16" viewBox="0 0 16 16"><defs><linearGradient id="ig3" x1="0" y1="0" x2="0" y2="1"><stop offset="0" stop-color="#9ad0ff"/><stop offset=".5" stop-color="#3f8fea"/><stop offset="1" stop-color="#3a8cf0"/></linearGradient></defs><circle cx="8" cy="8" r="7.200" fill="url(#ig3)" stroke="#2a58b8" stroke-width=".9"/><circle cx="8" cy="4.200" r="1.300" fill="#fff"/><path d="M6.200 6.600H9V11.400H10.200V12.600H6V11.400H7.200V7.800H6.200Z" fill="#fff"/></svg><div class="abs rrow" style="top:106px;">Open E:\Slava\0240 Терка\02\mil...</div><svg class="abs" style="left:3px;top:139px;" width="16" height="16" viewBox="0 0 16 16"><defs><linearGradient id="ig4" x1="0" y1="0" x2="0" y2="1"><stop offset="0" stop-color="#9ad0ff"/><stop offset=".5" stop-color="#3f8fea"/><stop offset="1" stop-color="#3a8cf0"/></linearGradient></defs><circle cx="8" cy="8" r="7.200" fill="url(#ig4)" stroke="#2a58b8" stroke-width=".9"/><circle cx="8" cy="4.200" r="1.300" fill="#fff"/><path d="M6.200 6.600H9V11.400H10.200V12.600H6V11.400H7.200V7.800H6.200Z" fill="#fff"/></svg><div class="abs rrow" style="top:140px;">Open E:\Slava\0240 Терка\02\mil...</div><svg class="abs" style="left:3px;top:173px;" width="16" height="16" viewBox="0 0 16 16"><defs><linearGradient id="ig5" x1="0" y1="0" x2="0" y2="1"><stop offset="0" stop-color="#9ad0ff"/><stop offset=".5" stop-color="#3f8fea"/><stop offset="1" stop-color="#3a8cf0"/></linearGradient></defs><circle cx="8" cy="8" r="7.200" fill="url(#ig5)" stroke="#2a58b8" stroke-width=".9"/><circle cx="8" cy="4.200" r="1.300" fill="#fff"/><path d="M6.200 6.600H9V11.400H10.200V12.600H6V11.400H7.200V7.800H6.200Z" fill="#fff"/></svg><div class="abs rrow" style="top:174px;">Open E:\Slava\0240 Терка\02\mil...</div></div>
<div class="abs" style="left:276px;top:381px;width:489px;height:4px;background:#84a8df;"></div><div class="abs" style="left:271px;top:79px;width:5px;height:466px;background:linear-gradient(90deg,#9ec4f3 0%,#a0c6f4 70%,#aad2fd 100%);"></div><svg class="abs" style="left:276px;top:79px;" width="489" height="302" viewBox="276 79 489 302"><defs><linearGradient id="vg" x1="0" y1="0" x2="0" y2="1"><stop offset="0" stop-color="#000004"/><stop offset="0.5" stop-color="#00004a"/><stop offset="1" stop-color="#00009a"/></linearGradient><g id="half" fill="none" stroke="#84f6f6" stroke-width="1.25">
<path d="M368 203.3C356 201 341 208 340 218.4C340 226 346 230 351 232"/>
<path d="M368 203.3L507.3 266.4"/>
<path d="M351 232L475.5 290.5"/>
<path d="M362 204L493 265.3Q497 267 500 266.5L507 266.4"/>
<path d="M343.3 223.9L472 282Q474 285 475.5 291"/>
<path d="M363 212.7Q357 215 358.4 219Q359 221 363 222.5"/>
<path d="M363 212.7L491 271.5"/>
<path d="M363 222.5L450 265L484 281.5"/>
<path d="M346.4 211.5L360 217"/>
<path d="M360 217L493.6 280" stroke-width="2.6" stroke="#8ff8f8"/>
<path d="M364 221L470 271" stroke-width="1.6" stroke="#6adada"/>
<path d="M408.7 254.4L418.8 246.3M411.8 260.4L421.4 251.8"/>
<path d="M507.3 266.4Q509 270 504 273Q498 276 495.2 279.3Q492 284 483 289Q479 291 476 291.3"/>
<path d="M493.7 265.6Q497 268 507 266.4M491 272L495.2 279.3M484 281.5Q489 282 495.2 279.5M476 291.3H483"/>
<path d="M507.3 266.4C510 272 512 276 513.4 277.8C516 282 519 285 522.5 287.6C526 291 530 294 534.6 296C540 299 546 301.5 552.8 303.6C560 306 567 308 574 310.4C580 312.500 587 315 593 317.2L580 328C577 327 574 325.500 571 324C567 322 564 320.500 560.4 318C555 314 550 310.500 545.2 307.4C540 304 536 302 531.6 299.8C527 297.500 523 296 518 294.8C512 293 507 291.800 501.2 291.4L476 291.3"/>
<path d="M501.2 286.9L500.5 291.4M579.4 320L584.7 321.8L586 325"/>
</g></defs><rect x="276" y="79" width="489" height="302" fill="url(#vg)"/><use href="#half"/><use href="#half" transform="rotate(180 520.4 246)"/><g fill="none" stroke="#ff20ff" stroke-width="1.1" stroke-dasharray="6 4">
<path d="M366 189.500L480 197.2L560 202.5L619.7 206.4V240.6"/>
<path d="M368 188L418.7 211.5"/>
<path d="M419.4 211V246.3M421.6 213V251.8"/>
<path d="M419.4 211L520.5 221.4M435 217.400L520.5 226.3H560"/>
<path d="M520.5 226.8V211.5L544 215"/>
<path d="M536 213.4L612 224M540 224.8L618.4 234.2M541.3 229.2L613.4 238"/>
<path d="M632 217L628 215.3V252M628 240H635"/>
<path d="M638 227.6L675 232M642.8 237.8L675 241M627.6 240.3L694.6 248.5V284.5"/>
<path d="M491.4 244.4V279.8"/>
</g><g fill="none" stroke="#ff1010" stroke-width="2.2" stroke-dasharray="4 2.5">
<path d="M363 183.600V216M365.8 183.6V222.6" stroke-width="1.6"/>
<path d="M435 217V252M638 222V255.500M675 232.700V264.3M679 241.500V274.4"/>
</g><g stroke="#8a8a80" stroke-width="1" fill="#8a8a80">
<path d="M520.4 246V229M520.4 246L533 235.500M520.4 246L537 253.500" fill="none"/>
<path d="M520.4 226.500L518.900 231H521.900ZM535 234L530.500 235.500L532.500 238ZM539.500 254.800L535.500 251.200L534.500 254Z" stroke="none"/>
<circle cx="520.4" cy="246" r="1.8" fill="#20c8c8" stroke="none"/>
</g>
<text x="522.8" y="227.800" font-family="Liberation Sans, sans-serif" font-size="12.500" fill="#ff1010" stroke="none">Z</text>
<text x="531.500" y="232.800" font-family="Liberation Serif, serif" font-weight="bold" font-size="13.500" fill="#20e820">Y</text>
<text x="538.800" y="252.800" font-family="Liberation Serif, serif" font-weight="bold" font-size="13.500" fill="#1010ff">X</text>
</svg>
<div class="abs panehdr" style="left:276px;top:385px;width:489px;height:22px;"><span style="top:5px;left:6px;letter-spacing:0.33px;">11_d2r1h4.31.tap</span></div><svg class="abs" style="left:734px;top:391px;" width="8" height="10" viewBox="0 0 8 10"><path d="M2.500 0.500H6V5H2.500Z" fill="none" stroke="#15428b" stroke-width="1"/><path d="M5.500 0.500V5" stroke="#15428b" stroke-width="1.600"/><path d="M0.500 5.500H7.500" stroke="#15428b" stroke-width="1.100"/><path d="M4 5.500V9.500" stroke="#15428b" stroke-width="1.100"/></svg><svg class="abs" style="left:749px;top:392px;" width="9" height="8" viewBox="0 0 9 8"><path d="M1 0.8L8 7.2M8 0.8L1 7.2" stroke="#15428b" stroke-width="1.7" fill="none"/></svg><div class="abs white" id="code" style="left:276px;top:407px;width:489px;height:138px;"><div class="abs" style="left:0;top:0;width:20px;height:138px;background-color:#fff;background-image:linear-gradient(45deg,#ebebeb 25%,transparent 25%,transparent 75%,#ebebeb 75%),linear-gradient(45deg,#ebebeb 25%,transparent 25%,transparent 75%,#ebebeb 75%);background-size:2px 2px;background-position:0 0,1px 1px;"></div><div class="abs" style="left:20px;top:0;width:1px;height:138px;background:#9a9a9a;"></div><div class="abs" style="left:70px;top:0;width:1px;height:138px;background-image:linear-gradient(#008080 50%,transparent 50%);background-size:1px 2px;"></div><div class="abs sb" style="left:469px;top:0;height:136px;width:17px;"><svg class="abs" style="left:4px;top:7px;" width="9" height="5" viewBox="0 0 9 5"><path d="M1 4.500L4.500 0.500L8 4.500Z" fill="#505050"/></svg><div class="abs thumb" style="top:18.5px;height:5px;background:linear-gradient(#f6f6f6,#d4d4d4);"></div><svg class="abs" style="left:4px;top:125px;" width="9" height="5" viewBox="0 0 9 5"><path d="M1 0.500L4.500 4.500L8 0.500Z" fill="#505050"/></svg></div><div class="abs ln" style="top:1px;">1</div><div class="abs code" style="top:1px;"><span class="cP">%PM</span></div><div class="abs ln" style="top:17px;">2</div><div class="abs code" style="top:17px;"><span class="cN">N1</span><span class="cG">G54</span></div><div class="abs ln" style="top:33px;">3</div><div class="abs code" style="top:33px;"><span class="cN">N2</span><span class="cG">G0</span><span class="cZ">Z30.</span></div><div class="abs ln" style="top:49px;">4</div><div class="abs code" style="top:49px;"><span class="cN">N3</span><span class="cS">S8000</span><span class="cM">M3</span></div><div class="abs ln" style="top:65px;">5</div><div class="abs code" style="top:65px;"><span class="cN">N4</span><span class="cX">X-32.805</span><span class="cY">Y25.64</span><span class="cM">M8</span></div><div class="abs ln" style="top:81px;">6</div><div class="abs code" style="top:81px;"><span class="cN">N5</span><span class="cZ">Z-3.307</span></div><div class="abs ln" style="top:97px;">7</div><div class="abs code" style="top:97px;"><span class="cN">N6</span><span class="cG">G1</span><span class="cZ">Z-4.307</span><span class="cF">F64</span></div><div class="abs ln" style="top:113px;">8</div><div class="abs code" style="top:113px;"><span class="cN">N7</span><span class="cX">X-31.781</span><span class="cY">Y25.347</span><span class="cZ">Z-4.199</span><span class="cF">F128</span></div><div class="abs ln" style="top:129px;">9</div><div class="abs code" style="top:129px;"><span class="cN">N8</span><span class="cX">X-30.641</span><span class="cY">Y25.194</span><span class="cZ">Z-4.096</span></div></div>
<div class="abs" style="left:765px;top:80px;width:25px;height:300px;border-radius:0 3px 3px 0;background:linear-gradient(90deg,#e4eefd 0%,#e0ebfd 25%,#d0e2fc 50%,#bfd6f8 65%,#b0cbf4 100%);border-right:1px solid #8fb0e4;"></div><div class="abs" style="left:771px;top:84px;width:15px;height:3px;background-image:radial-gradient(circle at 1px 1px,#7a9fe0 0.9px,transparent 1.2px);background-size:4px 3px;"></div><div class="abs" style="left:765px;top:369px;width:25px;height:11px;border-radius:0 0 3px 0;background:linear-gradient(90deg,#c3d8f8,#8fb0e6);"></div><svg class="abs" style="left:779px;top:370px;" width="9" height="8" viewBox="0 0 9 8"><path d="M1.500 1V7" stroke="#000" stroke-width="1"/><path d="M4 1V7L7.500 4Z" fill="#000"/><path d="M2.500 2V8" stroke="#fff" stroke-width="1" opacity=".8"/></svg><svg class="abs" style="left:771px;top:94px;" width="15" height="15" viewBox="0 0 15 15"><path d="M0.500 4.500H10.500V14.500H0.500ZM4.500 0.500H14.500V10.500H4.500ZM0.500 4.500L4.500 0.500M10.500 4.500L14.500 0.500M10.500 14.500L14.500 10.500M0.500 14.500L4.500 10.500" fill="none" stroke="#1a2a9c" stroke-width="1"/><path d="M0.500 4.500L4.500 0.500H14.500L10.500 4.500Z" fill="#f7e03c" stroke="#1a2a9c" stroke-width="1"/></svg><svg class="abs" style="left:771px;top:116px;" width="15" height="15" viewBox="0 0 15 15"><path d="M0.500 4.500H10.500V14.500H0.500ZM4.500 0.500H14.500V10.500H4.500ZM0.500 4.500L4.500 0.500M10.500 4.500L14.500 0.500M10.500 14.500L14.500 10.500M0.500 14.500L4.500 10.500" fill="none" stroke="#1a2a9c" stroke-width="1"/><path d="M10.500 4.500L14.500 0.500V10.500L10.500 14.500Z" fill="#f7e03c" stroke="#1a2a9c" stroke-width="1"/></svg><svg class="abs" style="left:771px;top:138px;" width="15" height="15" viewBox="0 0 15 15"><path d="M0.500 4.500H10.500V14.500H0.500ZM4.500 0.500H14.500V10.500H4.500ZM0.500 4.500L4.500 0.500M10.500 4.500L14.500 0.500M10.500 14.500L14.500 10.500M0.500 14.500L4.500 10.500" fill="none" stroke="#1a2a9c" stroke-width="1"/><path d="M0.500 4.500H10.500V14.500H0.500Z" fill="#f7e03c" stroke="#1a2a9c" stroke-width="1"/></svg><svg class="abs" style="left:771px;top:160px;" width="15" height="15" viewBox="0 0 15 15"><path d="M0.500 4.500L4.500 0.500V10.500L0.500 14.500Z" fill="#f7e03c" stroke="#1a2a9c" stroke-width="1"/><path d="M0.500 4.500H10.500V14.500H0.500ZM4.500 0.500H14.500V10.500H4.500ZM0.500 4.500L4.500 0.500M10.500 4.500L14.500 0.500M10.500 14.500L14.500 10.500M0.500 14.500L4.500 10.500" fill="none" stroke="#1a2a9c" stroke-width="1"/></svg><svg class="abs" style="left:771px;top:182px;" width="15" height="15" viewBox="0 0 15 15"><path d="M4.500 0.500H14.500V10.500H4.500Z" fill="#f7e03c" stroke="#1a2a9c" stroke-width="1"/><path d="M0.500 4.500H10.500V14.500H0.500ZM4.500 0.500H14.500V10.500H4.500ZM0.500 4.500L4.500 0.500M10.500 4.500L14.500 0.500M10.500 14.500L14.500 10.500M0.500 14.500L4.500 10.500" fill="none" stroke="#1a2a9c" stroke-width="1"/></svg><svg class="abs" style="left:771px;top:204px;" width="15" height="15" viewBox="0 0 15 15"><path d="M0.500 14.500L4.500 10.500H14.500L10.500 14.500Z" fill="#f7e03c" stroke="#1a2a9c" stroke-width="1"/><path d="M0.500 4.500H10.500V14.500H0.500ZM4.500 0.500H14.500V10.500H4.500ZM0.500 4.500L4.500 0.500M10.500 4.500L14.500 0.500M10.500 14.500L14.500 10.500M0.500 14.500L4.500 10.500" fill="none" stroke="#1a2a9c" stroke-width="1"/></svg><div class="abs" style="left:771px;top:225px;width:15px;height:1px;background:#9ab7e6;border-bottom:1px solid #f2f7ff;"></div><svg class="abs" style="left:770px;top:231px;" width="17" height="17" viewBox="0 0 17 17"><g stroke="#0c3c96" stroke-width=".7" stroke-linejoin="round"><path d="M6.700 11.400L11.900 8.700V5.600L15.800 3.600V10.600L8 15.200L6.700 14.500Z" fill="#2f80e0"/><path d="M5.700 2L9.600 0.400L15.800 3.600L11.900 5.600Z" fill="#f2f9ff"/><path d="M5.700 2L11.900 5.600V8.700L5.700 5.100Z" fill="#a8d0f8"/><path d="M0.500 8.200L5.700 5.100L11.900 8.700L6.700 11.400Z" fill="#f2f9ff"/><path d="M0.500 8.200L6.700 11.400V14.500L8 15.200L0.500 11.300Z" fill="#a8d0f8"/></g></svg><svg class="abs" style="left:770px;top:253px;" width="17" height="17" viewBox="0 0 17 17"><g stroke="#0c3c96" stroke-width=".7" stroke-linejoin="round"><path d="M0.400 3.300L5.700 5.700V8.500L11.400 11.900L10.300 15.300L0.400 10.300Z" fill="#1c62c8"/><path d="M0.400 3.300L4.100 0.700L9.600 3.300L5.700 5.700Z" fill="#f2f9ff"/><path d="M5.700 5.700L9.600 3.300V6.400L5.700 8.500Z" fill="#a8d0f8"/><path d="M5.700 8.500L9.600 6.400L15.800 9.500L11.400 11.900Z" fill="#f2f9ff"/><path d="M11.400 11.900L15.800 9.500V12.700L10.300 15.300Z" fill="#2f80e0"/></g></svg><svg class="abs" style="left:770px;top:276px;" width="17" height="17" viewBox="0 0 17 17"><g stroke="#0c3c96" stroke-width=".7" stroke-linejoin="round"><path d="M0.400 2.300L6.400 5.400V13L0.400 10Z" fill="#a8d0f8"/><path d="M0.400 2.300L4.100 0.400L10.300 3.400L6.400 5.400Z" fill="#f2f9ff"/><path d="M6.400 5.400L10.300 3.400L15.800 6.300V10L9.600 13.800L6.400 13Z" fill="#2f80e0"/><path d="M11.500 7.500L15.800 6.300V9L13 9.800Z" fill="#f2f9ff"/></g></svg><svg class="abs" style="left:770px;top:298px;" width="17" height="17" viewBox="0 0 17 17"><g stroke="#0c3c96" stroke-width=".7" stroke-linejoin="round"><path d="M8 5.500L11.800 3.500L15.800 5.500V10.800L8.500 15.300L8 15Z" fill="#2f80e0"/><path d="M8 2.500L11.800 0.600L15.800 2.600V5.500L11.800 3.500L8 5.500Z" fill="#f2f9ff"/><path d="M0.400 8.500L8 5.500V15L0.400 11.500Z" fill="#1c62c8"/><path d="M0.400 8.500L4 6.500L5.500 9L2.500 10Z" fill="#f2f9ff"/><path d="M8 2.500V5.500L4 7.200L0.400 8.500L5 5Z" fill="#a8d0f8"/></g></svg><div class="abs" style="left:771px;top:318px;width:15px;height:1px;background:#9ab7e6;border-bottom:1px solid #f2f7ff;"></div><svg class="abs" style="left:769px;top:324px;" width="18" height="18" viewBox="0 0 18 18"><path d="M11 11L16 16" stroke="#e08a30" stroke-width="2.400" stroke-linecap="round"/><circle cx="7.500" cy="7.500" r="6.300" fill="#f4f8fc" stroke="#a8a8a8" stroke-width="1.200"/><path d="M5 4H8.500L10.500 6V11H5Z" fill="#fff" stroke="#1d4fa5" stroke-width="1"/></svg><svg class="abs" style="left:769px;top:346px;" width="18" height="18" viewBox="0 0 18 18"><path d="M1.500 2V15.500H14" stroke="#555" stroke-width="1" fill="none"/><path d="M1.500 1.500H15.500V12" stroke="#1010c0" stroke-width="1.200" stroke-dasharray="1.200 1.200" fill="none"/><path d="M11 12L16 16.500" stroke="#e08a30" stroke-width="2.200" stroke-linecap="round"/><circle cx="8" cy="8.500" r="5" fill="#dbeeff" stroke="#a0a0a0" stroke-width="1.100"/><path d="M14 1.500H17M15.500 0V3" stroke="#e01010" stroke-width="1.200"/></svg><div class="abs" style="left:765px;top:409px;width:25px;height:114px;border-radius:0 3px 3px 0;background:linear-gradient(90deg,#e4eefd 0%,#e0ebfd 25%,#d0e2fc 50%,#bfd6f8 65%,#b0cbf4 100%);border-right:1px solid #8fb0e4;"></div><div class="abs" style="left:771px;top:412.5px;width:15px;height:3px;background-image:radial-gradient(circle at 1px 1px,#7a9fe0 0.9px,transparent 1.2px);background-size:4px 3px;"></div><div class="abs" style="left:765px;top:512px;width:25px;height:11px;border-radius:0 0 3px 0;background:linear-gradient(90deg,#c3d8f8,#8fb0e6);"></div><svg class="abs" style="left:779px;top:514px;" width="9" height="8" viewBox="0 0 9 8"><path d="M1.500 1V7" stroke="#000" stroke-width="1"/><path d="M4 1V7L7.500 4Z" fill="#000"/><path d="M2.500 2V8" stroke="#fff" stroke-width="1" opacity=".8"/></svg><div class="abs" style="left:767px;top:461px;width:22px;height:22px;box-sizing:border-box;border:1px solid #f29536;background:linear-gradient(#fdb25f 0%,#fba647 40%,#fb9b3a 50%,#fdbb60 100%);"></div><div class="abs" style="left:767px;top:488px;width:22px;height:23px;box-sizing:border-box;border:1px solid #f29536;background:linear-gradient(#fdb25f 0%,#fba647 40%,#fb9b3a 50%,#fdbb60 100%);"></div><svg class="abs" style="left:770px;top:419px;" width="17" height="17" viewBox="0 0 17 17"><path d="M2.500 14.500L14.500 2.500" stroke="#2a4fc8" stroke-width="1.200"/><rect x="1" y="13" width="3" height="3" fill="#e01818"/><rect x="13" y="1" width="3" height="3" fill="#e01818"/></svg><svg class="abs" style="left:770px;top:442px;" width="17" height="17" viewBox="0 0 17 17"><path d="M2 12A7 7 0 0 1 13 4.500" stroke="#2a4fc8" stroke-width="1.200" fill="none"/><rect x="8" y="9" width="3" height="3" fill="#e01818"/></svg><svg class="abs" style="left:770px;top:464px;" width="17" height="17" viewBox="0 0 17 17"><path d="M2 15L15 2" stroke="#e01818" stroke-width="1.200" stroke-dasharray="3 1.500 1 1.500"/></svg><div class="abs" style="left:771px;top:485px;width:15px;height:1px;background:#9ab7e6;border-bottom:1px solid #f2f7ff;"></div><svg class="abs" style="left:769px;top:491px;" width="19" height="18" viewBox="0 0 19 18"><ellipse cx="9" cy="14.500" rx="7" ry="2" fill="#8a6a40" opacity=".55"/><path d="M17.500 1L9.500 9" stroke="#222" stroke-width="2.200" stroke-linecap="round"/><path d="M10.500 8L8 10.500" stroke="#ddd" stroke-width="3"/><path d="M8.500 9.500Q4 10 2.500 14Q6 15 8.500 13.500Q10.500 12 10 10.500Z" fill="#1a1a1a"/></svg>
<div class="abs" style="left:4px;top:546px;width:787px;height:23px;background:linear-gradient(#dbe9fd 0%,#cfe1fb 40%,#bcd4f7 60%,#aecaf3 100%);border-bottom:1px solid #8fb0e4;box-sizing:border-box;"></div><div class="abs" style="left:779px;top:546px;width:12px;height:22px;background:linear-gradient(#d9e7fd 0%,#bcd3f6 45%,#9bbbed 75%,#86a9e2 100%);"></div><div class="abs" style="left:8px;top:551px;width:3px;height:12px;background-image:radial-gradient(circle at 1px 1px,#6a8ccb 0.9px,transparent 1.2px);background-size:3px 4px;"></div><div class="abs led" style="left:17px;"></div><div class="abs coord" style="left:36px;">X=0.0</div><div class="abs led" style="left:103px;"></div><div class="abs coord" style="left:123.3px;">Y=0.0</div><div class="abs led" style="left:189.5px;"></div><div class="abs coord" style="left:208.3px;">Z=0.0</div><div class="abs led" style="left:276px;"></div><div class="abs coord" style="left:294.3px;">A=0.0</div><div class="abs led" style="left:361.7px;"></div><div class="abs coord" style="left:380.7px;">B=0.0</div><div class="abs led" style="left:447.7px;"></div><div class="abs coord" style="left:466.7px;">R=0.0</div><div class="abs led" style="left:534.3px;"></div><div class="abs coord" style="left:552.7px;">F=0.0</div><div class="abs led" style="left:625px;"></div><div class="abs coord" style="left:643.3px;">S=0.0</div><div class="abs csep" style="left:96.2px;"></div><div class="abs csep" style="left:182.2px;"></div><div class="abs csep" style="left:267.8px;"></div><div class="abs csep" style="left:353.8px;"></div><div class="abs csep" style="left:439.5px;"></div><div class="abs csep" style="left:526.2px;"></div><div class="abs csep" style="left:616.8px;"></div><svg class="abs" style="left:781px;top:552px;" width="8" height="14" viewBox="0 0 8 14"><path d="M0.500 0.500V3.500L2.500 2ZM4.500 0.500V3.500L6.500 2Z" fill="#000"/><path d="M0.500 7H6.500" stroke="#000" stroke-width="1"/><path d="M0.500 9.500H6.500L3.500 12.500Z" fill="#000"/></svg><div class="abs" style="left:4px;top:569px;width:787px;height:20px;background:linear-gradient(#e6effc 0%,#d9e6fb 28%,#c6dbf9 36%,#bfd6f8 80%,#c6dbf9 100%);border-top:1px solid #f4f8ff;box-sizing:border-box;"></div><svg class="abs" style="left:777px;top:576px;" width="12" height="12" viewBox="0 0 12 12"><g fill="#fff"><rect x="9" y="9" width="2" height="2"/><rect x="5" y="9" width="2" height="2"/><rect x="1" y="9" width="2" height="2"/><rect x="9" y="5" width="2" height="2"/><rect x="5" y="5" width="2" height="2"/><rect x="9" y="1" width="2" height="2"/></g></svg><div class="abs" style="left:0;top:589px;width:795px;height:4px;background:linear-gradient(#3a4060 0%,#303448 60%,#8a8fa0 100%);"></div><div class="abs" style="left:791px;top:28px;width:4px;height:565px;background:linear-gradient(90deg,#2a2a30 0%,#3a3a44 60%,#777c8c 100%);"></div><div class="abs" style="left:0;top:28px;width:4px;height:565px;background:linear-gradient(90deg,#1a1a1a 0%,#2c2c2c 50%,#1e3a34 100%);"></div>
</body>
</html>
